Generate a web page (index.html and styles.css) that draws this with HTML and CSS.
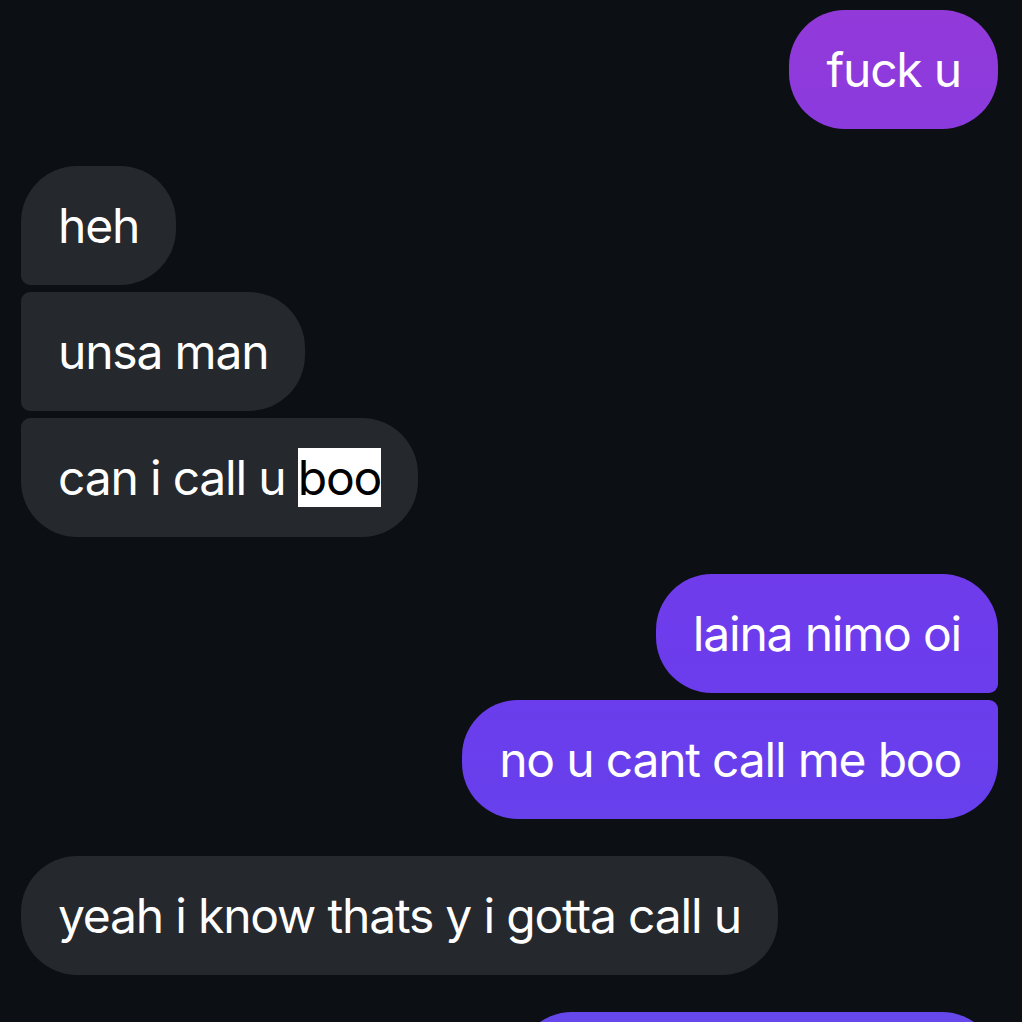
FILE: index.html
```html
<!DOCTYPE html>
<html lang="en">
<head>
<meta charset="utf-8">
<title>Chat</title>
<link rel="stylesheet" href="styles.css">
</head>
<body>
<main class="thread">
  <section class="group out">
    <div class="bubble solo">fuck u</div>
  </section>
  <section class="group in">
    <div class="bubble first">heh</div>
    <div class="bubble middle">unsa man</div>
    <div class="bubble last">can i call u <span class="sel">boo</span></div>
  </section>
  <section class="group out">
    <div class="bubble first">laina nimo oi</div>
    <div class="bubble last">no u cant call me boo</div>
  </section>
  <section class="group in">
    <div class="bubble solo">yeah i know thats y i gotta call u</div>
  </section>
  <section class="group out">
    <div class="bubble solo pending" aria-hidden="true"></div>
  </section>
</main>
</body>
</html>
```
FILE: styles.css
```css
html, body {
  margin: 0;
  padding: 0;
  background: #0c0f13;
  overflow: hidden;
  height: 100%;
}

.thread {
  display: flex;
  flex-direction: column;
  gap: 37px;
  padding: 10px 24px 0 21px;
  font-family: "Inter", "Noto Sans", sans-serif;
  font-size: 48px;
  letter-spacing: -1.2px;
  color: #ffffff;
}

.group {
  display: flex;
  flex-direction: column;
  gap: 7px;
}

.group.in { align-items: flex-start; }
.group.out { align-items: flex-end; }

.bubble {
  padding: 30px 37px;
  line-height: 59px;
  white-space: nowrap;
  border-radius: 56px;
}

.bubble.pending {
  box-sizing: border-box;
  width: 482px;
  height: 119px;
}

.in .bubble { background: #25282c; }

.out .bubble {
  background: linear-gradient(to bottom, #9339d9 0%, #8e3adc 8%, #7a3be6 35%, #6d3cec 62%, #683fec 78%, #6547ea 100%);
  background-attachment: fixed;
}

.in .bubble.first { border-bottom-left-radius: 9px; }
.in .bubble.middle { border-top-left-radius: 9px; border-bottom-left-radius: 9px; }
.in .bubble.last { border-top-left-radius: 9px; }

.out .bubble.first { border-bottom-right-radius: 9px; }
.out .bubble.middle { border-top-right-radius: 9px; border-bottom-right-radius: 9px; }
.out .bubble.last { border-top-right-radius: 9px; }

.sel {
  background: #ffffff;
  color: #000000;
}
```
